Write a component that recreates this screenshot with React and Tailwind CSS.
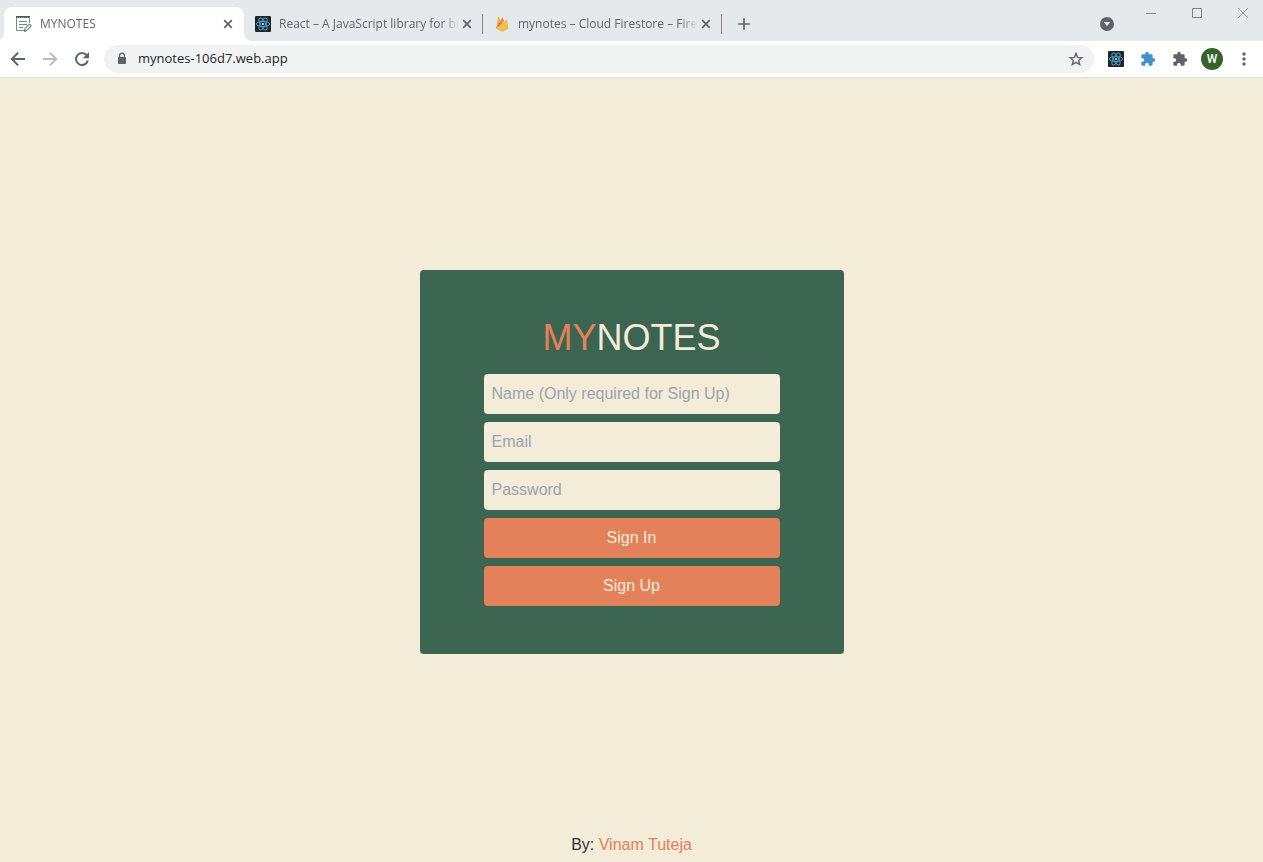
import React from "react";
import { MdAdd, MdExtension, MdMoreVert } from "react-icons/md";

const UI_FONT = "font-['Segoe_UI','Open_Sans',sans-serif]";

function NotesIcon() {
  return (
    <svg viewBox="0 0 16 16" className="size-4 shrink-0" fill="none" aria-hidden="true">
      <path d="M.5 2v12.5h8M13.5 2v5" stroke="#7b8c88" />
      <path d="M0 1h14" stroke="#3b5f55" strokeWidth="2" />
      <path d="M1 1.5h13" stroke="#8fa59e" strokeWidth="1" strokeDasharray="1 1" />
      <path d="M3 5.5h8M3 8.5h8M3 11.5h4" stroke="#7a8481" />
      <path d="M9 12.6 13.4 8l2 1.8-4.3 4.6-2.7 1z" fill="#dce8df" stroke="#44695c" />
    </svg>
  );
}

function ReactIcon() {
  return (
    <svg viewBox="0 0 16 16" className="size-4 shrink-0" fill="none" aria-hidden="true">
      <rect width="16" height="16" rx=".8" fill="#222529" />
      <g stroke="#4a9fc6" strokeWidth="1">
        <ellipse cx="8" cy="8" rx="6.6" ry="2.6" />
        <ellipse cx="8" cy="8" rx="6.6" ry="2.6" transform="rotate(60 8 8)" />
        <ellipse cx="8" cy="8" rx="6.6" ry="2.6" transform="rotate(120 8 8)" />
      </g>
      <circle cx="8" cy="8" r="1.3" fill="#7fcbe8" />
    </svg>
  );
}

function FirebaseIcon() {
  return (
    <svg viewBox="0 0 16 16" className="size-4 shrink-0" aria-hidden="true">
      <path d="M2 12.8 4 .9c.1-.5.6-.5.8-.1L7 4.7z" fill="#f0b454" />
      <path d="m2 12.8 6-10.9c.2-.4.6-.4.8 0l1.4 3z" fill="#e58a4e" />
      <path d="m2 12.8 10.4-9.1c.3-.3.8-.1.9.3l1.1 8.8-5.7 3c-.4.2-.8.2-1.2 0z" fill="#efbe57" />
      <path d="m2 12.8 3.2-6.2 3 .7z" fill="#e0764a" />
    </svg>
  );
}

function LockIcon() {
  return (
    <svg viewBox="0 0 16 16" className="size-4 shrink-0" fill="none" aria-hidden="true">
      <path d="M5.6 7V4.6a2.4 2.4 0 0 1 4.8 0V7" stroke="#5f6368" strokeWidth="1.3" />
      <rect x="4" y="6" width="8" height="7" rx=".8" fill="#5f6368" />
    </svg>
  );
}

function BackIcon() {
  return (
    <svg viewBox="0 0 20 20" className="size-5" fill="none" stroke="currentColor" strokeWidth="2" aria-hidden="true">
      <path d="M17 10H4.5M10.2 3.6 3.8 10l6.4 6.4" />
    </svg>
  );
}

function ForwardIcon() {
  return (
    <svg viewBox="0 0 20 20" className="size-5" fill="none" stroke="currentColor" strokeWidth="2" aria-hidden="true">
      <path d="M3 10h12.5M9.8 3.6l6.4 6.4-6.4 6.4" />
    </svg>
  );
}

function ReloadIcon() {
  return (
    <svg viewBox="0 0 20 20" className="size-5" fill="none" aria-hidden="true">
      <path d="M14.6 6.2A6 6 0 1 0 15.8 11.6" stroke="currentColor" strokeWidth="2" />
      <path d="M17 3v6.2h-6.2z" fill="currentColor" />
    </svg>
  );
}

function CloseIcon() {
  return (
    <svg viewBox="0 0 16 16" className="size-4" fill="none" stroke="currentColor" strokeWidth="1.7" aria-hidden="true">
      <path d="m4.2 4.2 7.6 7.6M11.8 4.2l-7.6 7.6" />
    </svg>
  );
}

function StarIcon() {
  return (
    <svg viewBox="0 0 16 16" className="size-4" fill="none" stroke="currentColor" strokeWidth="1.4" aria-hidden="true">
      <path d="m8 2.4 1.6 4 4.3.3-3.3 2.8 1.1 4.1L8 11.4l-3.7 2.2 1.1-4.1-3.3-2.8 4.3-.3z" />
    </svg>
  );
}

function Tab({ icon, title, active, divider }) {
  return (
    <div
      className={
        active
          ? "relative -mr-px flex w-60 items-center rounded-t-lg bg-white pr-2 pl-3"
          : "relative flex w-[239px] items-center pr-[7px] pl-3"
      }
    >
      {active && (
        <>
          <svg viewBox="0 0 8 8" className="absolute bottom-0 -left-2 size-2 fill-white" aria-hidden="true">
            <path d="M8 0v8H0a8 8 0 0 0 8-8z" />
          </svg>
          <svg viewBox="0 0 8 8" className="absolute -right-2 bottom-0 size-2 fill-white" aria-hidden="true">
            <path d="M0 0v8h8a8 8 0 0 1-8-8z" />
          </svg>
        </>
      )}
      {icon}
      <button
        type="button"
        className="ml-2 min-w-0 flex-1 overflow-hidden mask-r-from-90% text-left text-xs whitespace-nowrap text-[#62666b]"
      >
        {title}
      </button>
      <button type="button" aria-label="Close tab" className="text-[#5f6368]">
        <CloseIcon />
      </button>
      {divider && <span className="absolute -right-px h-5 w-px bg-[#8a8288]" />}
    </div>
  );
}

function TabStrip() {
  return (
    <div className="flex h-[41px] bg-[#e6e9ec] pl-1">
      <div className="flex pt-[7px]">
        <Tab icon={<NotesIcon />} title="MYNOTES" active />
        <Tab icon={<ReactIcon />} title="React – A JavaScript library for bu" divider />
        <Tab icon={<FirebaseIcon />} title="mynotes – Cloud Firestore – Fireb" divider />
        <button type="button" aria-label="New tab" className="ml-[13px] text-[#5f6368]">
          <MdAdd className="size-5" />
        </button>
      </div>
      <div className="ml-auto flex items-start">
        <button type="button" aria-label="Search tabs" className="mt-4 mr-[13px]">
          <svg viewBox="0 0 16 16" className="size-4" aria-hidden="true">
            <circle cx="8" cy="8" r="7" fill="#5f6368" />
            <path d="M4.8 6h6.4L8 10.3z" fill="#e6e9ec" />
          </svg>
        </button>
        <button type="button" aria-label="Minimize" className="flex h-[26px] w-[46px] items-center justify-center">
          <svg viewBox="0 0 10 10" className="size-2.5" fill="none" stroke="#8a8488" aria-hidden="true">
            <path d="M0 5.5h10" />
          </svg>
        </button>
        <button type="button" aria-label="Maximize" className="flex h-[26px] w-[46px] items-center justify-center">
          <svg viewBox="0 0 10 10" className="size-2.5" fill="none" stroke="#8a7f88" aria-hidden="true">
            <path d="M.5.5h9v9h-9z" />
          </svg>
        </button>
        <button type="button" aria-label="Close" className="flex h-[26px] w-[43px] items-center justify-center pl-[3px]">
          <svg viewBox="0 0 10 10" className="size-2.5" fill="none" stroke="#94949a" aria-hidden="true">
            <path d="m0 0 10 10M10 0 0 10" />
          </svg>
        </button>
      </div>
    </div>
  );
}

function Toolbar() {
  return (
    <div className="flex h-[37px] items-center border-b border-[#dadfdf] bg-white pr-[11px] pl-2">
      <div className="flex gap-3 text-[#5f6368]">
        <button type="button" aria-label="Back">
          <BackIcon />
        </button>
        <button type="button" aria-label="Forward" className="text-[#bdbdb8]">
          <ForwardIcon />
        </button>
        <button type="button" aria-label="Reload">
          <ReloadIcon />
        </button>
      </div>
      <div className="ml-3 flex h-7 flex-1 items-center rounded-full bg-[#f1f3f3] pr-2.5 pl-2.5">
        <LockIcon />
        <input
          type="text"
          aria-label="Address"
          defaultValue="mynotes-106d7.web.app"
          className="ml-2 min-w-0 flex-1 bg-transparent text-[13px] text-[#26282b] outline-none"
        />
        <button type="button" aria-label="Bookmark this page" className="text-[#5f6368]">
          <StarIcon />
        </button>
      </div>
      <div className="ml-3 flex items-center gap-4 pl-0.5 text-[#5f6368]">
        <button type="button" aria-label="React Developer Tools">
          <ReactIcon />
        </button>
        <button type="button" aria-label="Extension" className="text-[#4290cf]">
          <MdExtension className="size-4" />
        </button>
        <button type="button" aria-label="Extensions">
          <MdExtension className="size-4" />
        </button>
        <button
          type="button"
          aria-label="Profile"
          className="-mx-[3px] flex size-[22px] items-center justify-center rounded-full bg-[#33632b] font-[Roboto,sans-serif] text-xs font-medium text-white"
        >
          W
        </button>
        <button type="button" aria-label="Menu" className="-mx-0.5">
          <MdMoreVert className="size-5" />
        </button>
      </div>
    </div>
  );
}

const FIELDS = [
  { type: "text", label: "Name (Only required for Sign Up)" },
  { type: "email", label: "Email" },
  { type: "password", label: "Password" },
];

function SignInCard() {
  return (
    <form
      onSubmit={(e) => e.preventDefault()}
      className="flex w-full max-w-[424px] flex-col gap-2 rounded bg-[#3b6451] px-16 py-12"
    >
      <h1 className="mb-2 text-center text-4xl text-[#f2ecd8]">
        <span className="text-[#e3825a]">MY</span>NOTES
      </h1>
      {FIELDS.map((field) => (
        <input
          key={field.label}
          type={field.type}
          aria-label={field.label}
          placeholder={field.label}
          className="w-full rounded bg-[#f2ecd8] p-2 text-base text-[#393232] placeholder:text-[#9ca3af]"
        />
      ))}
      <button type="submit" className="rounded bg-[#e3825a] p-2 text-base text-[#f2ecd8]">
        Sign In
      </button>
      <button type="button" className="rounded bg-[#e3825a] p-2 text-base text-[#f2ecd8]">
        Sign Up
      </button>
    </form>
  );
}

export default function App() {
  return (
    <div className="flex min-h-screen flex-col">
      <header className={UI_FONT}>
        <TabStrip />
        <Toolbar />
      </header>
      <div className="flex flex-1 flex-col bg-[#f2ecd8] font-['Liberation_Sans',Arial,sans-serif]">
        <main className="flex flex-1 items-center justify-center pt-[13px]">
          <SignInCard />
        </main>
        <footer className="pb-[5px] text-center text-base text-[#393232]">
          By:{" "}
          <a href="#author" className="text-[#e3825a]">
            Vinam Tuteja
          </a>
        </footer>
      </div>
    </div>
  );
}
